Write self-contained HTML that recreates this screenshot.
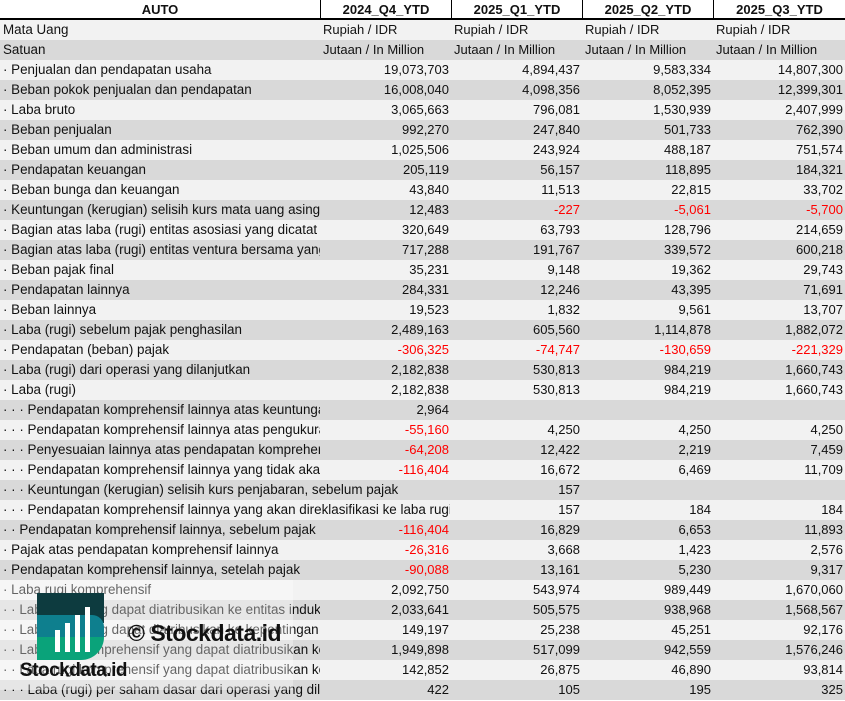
<!DOCTYPE html>
<html><head><meta charset="utf-8"><style>
*{margin:0;padding:0;box-sizing:border-box}
body{width:845px;height:701px;overflow:hidden;background:#fff;font-family:"Liberation Sans",Arial,sans-serif;font-size:13px;color:#111;position:relative}
.r{position:absolute;left:0;width:845px;height:20px;line-height:20px}
.r div{position:absolute;top:0;height:20px;overflow:hidden;white-space:nowrap}
.l{left:3px;width:317px;font-size:13.4px}
.c1{left:320px;width:131px}.c2{left:451px;width:131px}.c3{left:582px;width:131px}.c4{left:713px;width:132px}
.n{text-align:right;padding-right:2px}
.u{padding-left:3px}
.red{color:#f00}
.a{background:#f2f2f2}.b{background:#d9d9d9}
.h{font-weight:bold;text-align:center;border-bottom:2px solid #000;background:#fff}
.h div{border-left:1px solid #000}
.h .l{border-left:none;left:0;width:320px;font-size:13px}
</style></head><body>
<div class="r h" style="top:0"><div class="l">AUTO</div><div class="c1">2024_Q4_YTD</div><div class="c2">2025_Q1_YTD</div><div class="c3">2025_Q2_YTD</div><div class="c4">2025_Q3_YTD</div></div>
<div class="r a" style="top:20px"><div class="l">Mata Uang</div><div class="c1 u">Rupiah / IDR</div><div class="c2 u">Rupiah / IDR</div><div class="c3 u">Rupiah / IDR</div><div class="c4 u">Rupiah / IDR</div></div>
<div class="r b" style="top:40px"><div class="l">Satuan</div><div class="c1 u">Jutaan / In Million</div><div class="c2 u">Jutaan / In Million</div><div class="c3 u">Jutaan / In Million</div><div class="c4 u">Jutaan / In Million</div></div>
<div id="rows"></div>
<script>
var d=[
["· Penjualan dan pendapatan usaha","19,073,703","4,894,437","9,583,334","14,807,300"],
["· Beban pokok penjualan dan pendapatan","16,008,040","4,098,356","8,052,395","12,399,301"],
["· Laba bruto","3,065,663","796,081","1,530,939","2,407,999"],
["· Beban penjualan","992,270","247,840","501,733","762,390"],
["· Beban umum dan administrasi","1,025,506","243,924","488,187","751,574"],
["· Pendapatan keuangan","205,119","56,157","118,895","184,321"],
["· Beban bunga dan keuangan","43,840","11,513","22,815","33,702"],
["· Keuntungan (kerugian) selisih kurs mata uang asing","12,483","-227","-5,061","-5,700"],
["· Bagian atas laba (rugi) entitas asosiasi yang dicatat","320,649","63,793","128,796","214,659"],
["· Bagian atas laba (rugi) entitas ventura bersama yang","717,288","191,767","339,572","600,218"],
["· Beban pajak final","35,231","9,148","19,362","29,743"],
["· Pendapatan lainnya","284,331","12,246","43,395","71,691"],
["· Beban lainnya","19,523","1,832","9,561","13,707"],
["· Laba (rugi) sebelum pajak penghasilan","2,489,163","605,560","1,114,878","1,882,072"],
["· Pendapatan (beban) pajak","-306,325","-74,747","-130,659","-221,329"],
["· Laba (rugi) dari operasi yang dilanjutkan","2,182,838","530,813","984,219","1,660,743"],
["· Laba (rugi)","2,182,838","530,813","984,219","1,660,743"],
["· · · Pendapatan komprehensif lainnya atas keuntungan","2,964","","",""],
["· · · Pendapatan komprehensif lainnya atas pengukuran","-55,160","4,250","4,250","4,250"],
["· · · Penyesuaian lainnya atas pendapatan komprehensif","-64,208","12,422","2,219","7,459"],
["· · · Pendapatan komprehensif lainnya yang tidak akan","-116,404","16,672","6,469","11,709"],
["· · · Keuntungan (kerugian) selisih kurs penjabaran, sebelum pajak","","157","",""],
["· · · Pendapatan komprehensif lainnya yang akan direklasifikasi ke laba rugi","","157","184","184"],
["· · Pendapatan komprehensif lainnya, sebelum pajak","-116,404","16,829","6,653","11,893"],
["· Pajak atas pendapatan komprehensif lainnya","-26,316","3,668","1,423","2,576"],
["· Pendapatan komprehensif lainnya, setelah pajak","-90,088","13,161","5,230","9,317"],
["· Laba rugi komprehensif","2,092,750","543,974","989,449","1,670,060"],
["· · Laba rugi yang dapat diatribusikan ke entitas induk","2,033,641","505,575","938,968","1,568,567"],
["· · Laba rugi yang dapat diatribusikan ke kepentingan","149,197","25,238","45,251","92,176"],
["· · Laba rugi komprehensif yang dapat diatribusikan ke","1,949,898","517,099","942,559","1,576,246"],
["· · Laba rugi komprehensif yang dapat diatribusikan ke","142,852","26,875","46,890","93,814"],
["· · · Laba (rugi) per saham dasar dari operasi yang dilanjutkan","422","105","195","325"]];
var h="";
d.forEach(function(r,i){
 var y=60+i*20,cls=i%2?"b":"a";
 var lw=317;
 if(r[1]===""){lw=i==22?447:410;}
 h+='<div class="r '+cls+'" style="top:'+y+'px"><div class="l" style="width:'+lw+'px">'+r[0]+'</div>';
 for(var k=1;k<5;k++){var v=r[k];h+='<div class="c'+k+' n'+(v.charAt(0)=="-"?" red":"")+'">'+v+'</div>';}
 h+='</div>';
});
document.getElementById("rows").innerHTML=h;
</script>
<div style="position:absolute;left:0;top:580px;width:293px;height:110px;background:rgba(255,255,255,0.35)"></div>
<svg style="position:absolute;left:37px;top:593px" width="67" height="67" viewBox="0 0 67 67">
<path d="M0 0H67V30H0Z" fill="#0d3b3f"/>
<path d="M0 22H55A12 12 0 0 1 67 34V44H0Z" fill="#0e7f8e"/>
<path d="M0 44H67A23 23 0 0 1 44 67H0Z" fill="#0aa37a"/>
<rect x="18" y="37" width="5" height="22" fill="#fff"/><rect x="28" y="30" width="5" height="29" fill="#fff"/><rect x="38" y="22" width="5" height="37" fill="#fff"/><rect x="48" y="14" width="5" height="45" fill="#fff"/>
</svg>
<div style="position:absolute;left:20px;top:660px;font-weight:bold;font-size:19px;color:#111;letter-spacing:-0.5px">Stockdata.id</div>
<div style="position:absolute;left:128px;top:620px;font-weight:bold;font-size:23px;color:#111;letter-spacing:-0.5px">© Stockdata.id</div>
</body></html>
